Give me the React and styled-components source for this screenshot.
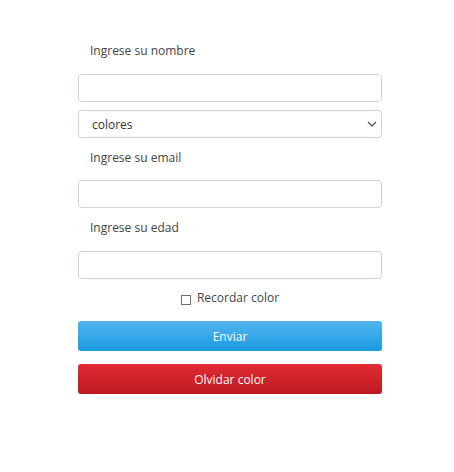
import React from "react";
import styled, { createGlobalStyle } from "styled-components";

const GlobalStyle = createGlobalStyle`
  body {
    margin: 0;
    background: #ffffff;
    font-family: "Open Sans", "Noto Sans", sans-serif;
  }
`;

const Page = styled.div`
  padding: 31px 0 0 78px;
`;

const Form = styled.form`
  width: 304px;
  display: flex;
  flex-direction: column;
`;

const Label = styled.label`
  display: block;
  padding: 10px 12px ${(p) => p.$bottom ?? 13}px;
  font-size: 12px;
  line-height: 20px;
  color: #444;
`;

const TextInput = styled.input`
  box-sizing: border-box;
  width: 100%;
  height: 28px;
  border: 1px solid #ced4da;
  border-radius: 4px;
  padding: 0 11px;
  font-family: inherit;
  font-size: 12px;
  outline: none;
`;

const SelectWrap = styled.div`
  position: relative;
  margin-top: 8px;
`;

const Select = styled.select`
  box-sizing: border-box;
  width: 100%;
  height: 28px;
  border: 1px solid #ced4da;
  border-radius: 4px;
  padding: 0 13px;
  background: #fff;
  color: #333;
  font-family: inherit;
  font-size: 12px;
  appearance: none;
  outline: none;
`;

const Chevron = styled.svg`
  position: absolute;
  right: 5px;
  top: 11px;
  pointer-events: none;
`;

const CheckRow = styled.label`
  display: flex;
  justify-content: center;
  align-items: center;
  gap: 6px;
  margin-top: 9px;
  font-size: 12px;
  line-height: 20px;
  color: #444;
`;

const Box = styled.span`
  box-sizing: border-box;
  width: 10px;
  height: 10px;
  border: 1px solid #6b6b6b;
  margin-top: 3px;
`;

const Button = styled.button`
  height: 30px;
  width: 100%;
  margin-top: ${(p) => p.$gap}px;
  border: none;
  border-radius: 3px;
  color: #fff;
  font-family: inherit;
  font-size: 12px;
  background: ${(p) =>
    p.$danger
      ? "linear-gradient(#e12b35, #bc1921)"
      : "linear-gradient(#52b4ef, #1a9ae0)"};
  cursor: pointer;
`;

export default function App() {
  return (
    <Page>
      <GlobalStyle />
      <Form onSubmit={(e) => e.preventDefault()}>
        <Label>Ingrese su nombre</Label>
        <TextInput type="text" />
        <SelectWrap>
          <Select defaultValue="colores">
            <option value="colores">colores</option>
          </Select>
          <Chevron width="10" height="6" viewBox="0 0 10 6">
            <path d="M1 1l4 4 4-4" fill="none" stroke="#555" strokeWidth="1.3" />
          </Chevron>
        </SelectWrap>
        <Label $bottom={12}>Ingrese su email</Label>
        <TextInput type="email" />
        <Label>Ingrese su edad</Label>
        <TextInput type="text" />
        <CheckRow>
          <Box />
          Recordar color
        </CheckRow>
        <Button type="submit" $gap={13}>Enviar</Button>
        <Button type="button" $danger $gap={13}>Olvidar color</Button>
      </Form>
    </Page>
  );
}
